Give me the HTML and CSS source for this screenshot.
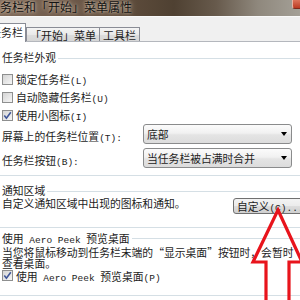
FILE: index.html
```html
<!DOCTYPE html>
<html lang="zh-CN">
<head>
<meta charset="utf-8">
<link rel="stylesheet" href="styles.css">
</head>
<body>
<div class="titlebar">
  <div class="title">任务栏和「开始」菜单属性</div>
  <div class="close"></div>
</div>
<div class="tabstrip">
  <div class="tab active">任务栏</div>
  <div class="tab">「开始」菜单</div>
  <div class="tab">工具栏</div>
</div>
<div class="panel">
  <div class="group g1">
    <div class="ghead"><span>任务栏外观</span></div>
    <div class="checks">
      <div class="row"><span class="cb"></span><span>锁定任务栏<span class="lat">(L)</span></span></div>
      <div class="row"><span class="cb"></span><span>自动隐藏任务栏<span class="lat">(U)</span></span></div>
      <div class="row"><span class="cb"><svg width="9" height="9" viewBox="0 0 9 9"><path d="M1.3 4.6 L3.4 7.2 L7.8 1.2" fill="none" stroke="#3f5699" stroke-width="1.6"/></svg></span><span>使用小图标<span class="lat">(I)</span></span></div>
    </div>
    <div class="frow">
      <span class="flabel">屏幕上的任务栏位置<span class="lat">(T):</span></span>
      <div class="select"><span>底部</span><span class="caret"></span></div>
    </div>
    <div class="frow second">
      <span class="flabel">任务栏按钮<span class="lat">(B):</span></span>
      <div class="select"><span>当任务栏被占满时合并</span><span class="caret"></span></div>
    </div>
  </div>
  <div class="group g2">
    <div class="ghead"><span>通知区域</span></div>
    <div class="nrow">
      <span class="ndesc">自定义通知区域中出现的图标和通知。</span>
      <div class="button">自定义<span class="lat">(C)...</span></div>
    </div>
  </div>
  <div class="group g3">
    <div class="ghead"><span>使用<span class="lat"> Aero Peek </span>预览桌面</span></div>
    <p class="pdesc">当您将鼠标移动到任务栏末端的<span class="q ql">“</span>显示桌面<span class="q qr">”</span>按钮时，会暂时查看桌面。</p>
    <div class="row last"><span class="cb"><svg width="9" height="9" viewBox="0 0 9 9"><path d="M1.3 4.6 L3.4 7.2 L7.8 1.2" fill="none" stroke="#3f5699" stroke-width="1.6"/></svg></span><span>使用<span class="lat"> Aero Peek </span>预览桌面<span class="lat">(P)</span></span></div>
  </div>
</div>
<svg class="arrow" width="300" height="300" viewBox="0 0 300 300">
  <polygon points="278,210 302,262 289,262 289,306 266,306 266,262 253,262" fill="none" stroke="#e8141c" stroke-width="3.2" stroke-linejoin="miter"/>
</svg>
</body>
</html>
```

FILE: styles.css
```css
html, body {
  margin: 0;
  padding: 0;
}
body {
  width: 300px;
  height: 300px;
  overflow: hidden;
  position: relative;
  background: #ffffff;
  font-family: "Noto Sans CJK SC", "Noto Sans", sans-serif;
  font-size: 10.8px;
  color: #1c1c1c;
}
.lat {
  font-family: "Liberation Mono", monospace;
  font-size: 9.5px;
}

/* title bar */
.titlebar {
  height: 16px;
  display: flex;
  align-items: flex-start;
  overflow: hidden;
  background: linear-gradient(90deg, #7d6858 0%, #6e5a4a 22%, #5b4a3a 45%, #4f4132 58%, #675a4c 72%, #8f887d 86%, #a4a097 100%);
}
.title {
  margin-left: -12px;
  font-size: 12px;
  line-height: 14px;
  white-space: nowrap;
  color: #141414;
  text-shadow: 0 0 3px rgba(230, 212, 190, 0.9), 0 0 7px rgba(220, 200, 178, 0.8);
}
.close {
  margin-left: auto;
  width: 7px;
  height: 8px;
  background: linear-gradient(#dc735a, #bb3a22);
  border-left: 1px solid #e8b2a2;
  border-bottom: 1px solid #7e2a1b;
  border-bottom-left-radius: 3px;
}

/* tabs */
.tabstrip {
  height: 26px;
  box-sizing: border-box;
  background: #f0f0f0;
  border-top: 1px solid #fafafa;
  border-bottom: 1px solid #b4b7bd;
  display: flex;
  align-items: flex-end;
}
.tab {
  font-size: 11px;
  line-height: 12px;
  height: 12px;
  padding: 1px 3px 0;
  border: 1px solid #898c95;
  border-bottom: none;
  background: linear-gradient(#f4f4f4, #e9e9e9 50%, #dddddd 51%, #d6d6d6);
  white-space: nowrap;
  margin-left: -1px;
}
.tab.active {
  position: relative;
  z-index: 1;
  background: #ffffff;
  margin-left: -14px;
  margin-bottom: -1px;
  height: 12px;
  padding: 2px 2px 4px 3px;
}
.tab.active + .tab {
  margin-left: 0;
}

/* panel */
.group {
  padding-left: 2px;
  border-bottom: 1px solid #d5dfe5;
}
.ghead {
  display: flex;
  align-items: flex-start;
  height: 12px;
  line-height: 12px;
  white-space: nowrap;
}
.ghead::after {
  content: "";
  flex: 1;
  height: 1px;
  background: #d5dfe5;
  margin-left: 2px;
  margin-top: 7px;
}
.g1 {
  margin-top: 9px;
  padding-bottom: 7px;
}
.checks {
  margin-top: 7px;
}
.row {
  display: flex;
  align-items: center;
  height: 18px;
  white-space: nowrap;
}
.cb {
  width: 11px;
  height: 11px;
  box-sizing: border-box;
  border: 1px solid #8e8f8f;
  background: linear-gradient(135deg, #d4d4d4, #f6f6f6);
  margin-right: 3px;
  flex-shrink: 0;
  display: flex;
  align-items: center;
  justify-content: center;
}
.cb svg {
  display: block;
}
.frow {
  display: flex;
  align-items: center;
  height: 20px;
  white-space: nowrap;
}
.frow.second {
  margin-top: 4px;
}
.flabel {
  width: 141px;
  padding-top: 4px;
  flex-shrink: 0;
}
.select {
  width: 149px;
  height: 20px;
  box-sizing: border-box;
  border: 1px solid #8a8b8c;
  border-radius: 3px;
  background: linear-gradient(#fbfbfb, #f1f1f1 45%, #e4e4e4 55%, #dcdcdc);
  display: flex;
  align-items: center;
  padding: 0 4px 0 3px;
  flex-shrink: 0;
}
.caret {
  margin-left: auto;
  width: 0;
  height: 0;
  border-left: 3.5px solid transparent;
  border-right: 3.5px solid transparent;
  border-top: 4px solid #000;
}

.g2 {
  margin-top: 8px;
  padding-bottom: 13px;
}
.nrow {
  display: flex;
  align-items: flex-start;
  margin-top: 1px;
  white-space: nowrap;
}
.ndesc {
  flex: 0 0 231px;
  line-height: 12px;
}
.button {
  flex-shrink: 0;
  margin-top: 1px;
  height: 14px;
  line-height: 14px;
  padding: 0 6px 0 3px;
  border: 1px solid #707070;
  border-radius: 3px;
  background: linear-gradient(#f3f3f3, #ebebeb 50%, #dddddd 51%, #cfcfcf);
}

.g3 {
  margin-top: 4px;
  padding-bottom: 13px;
}
.g3 .ghead::after {
  margin-top: 6px;
}
.pdesc {
  margin: 3px 0 0;
  line-height: 11px;
  width: 298px;
}
.q {
  display: inline-block;
  width: 1em;
}
.ql {
  text-align: right;
}
.qr {
  text-align: left;
}
.row.last {
  height: 13px;
}

.arrow {
  position: absolute;
  left: 0;
  top: 0;
  pointer-events: none;
}
```
